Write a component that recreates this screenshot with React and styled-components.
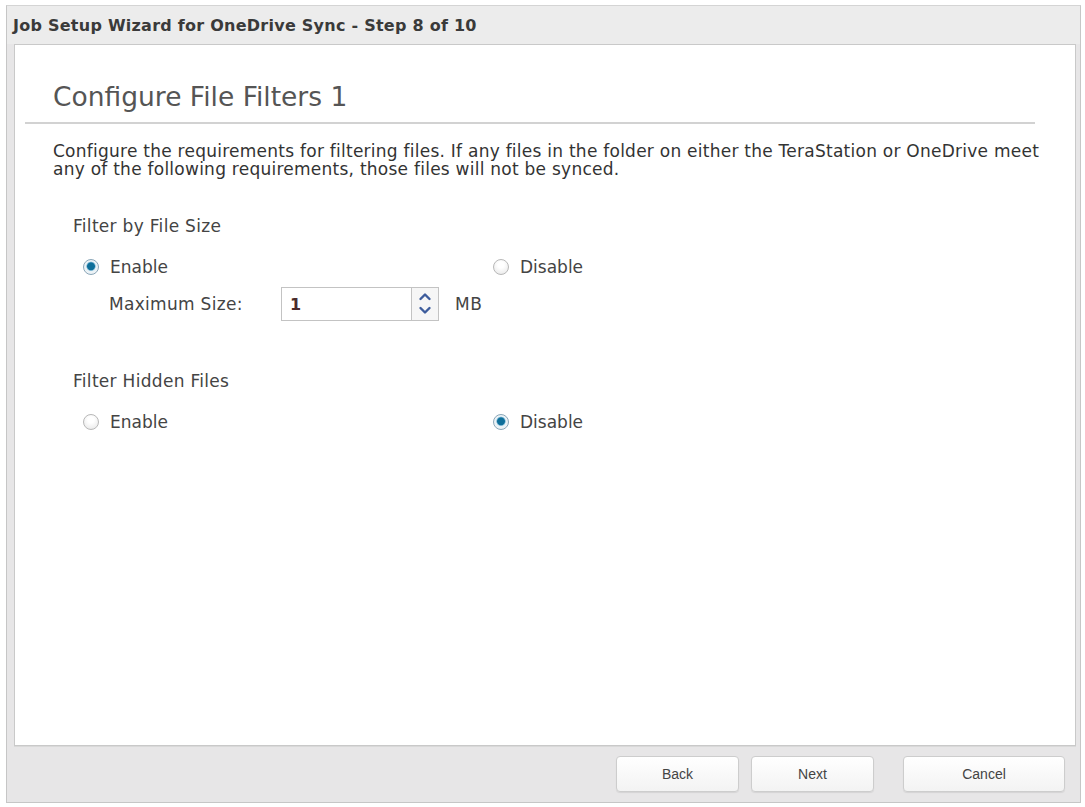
import styled, { createGlobalStyle } from 'styled-components';
import { useState } from 'react';

const GlobalStyle = createGlobalStyle`
  html, body {
    margin: 0;
    background: #fff;
  }
  body {
    font-family: "DejaVu Sans", Tahoma, sans-serif;
    color: #333;
  }
`;

function Radio({ checked, label, onClick }) {
  return (
    <RadioLabel onClick={onClick}>
      <RadioDot checked={checked} />
      {label}
    </RadioLabel>
  );
}

function Spinner() {
  return (
    <SpinBox>
      <svg width="14" height="30" viewBox="0 0 14 30">
        <path d="M2.5 10 L7 5.5 L11.5 10" fill="none" stroke="#3d5c9c" strokeWidth="2.4" strokeLinecap="round" strokeLinejoin="round" />
        <path d="M2.5 19 L7 23.5 L11.5 19" fill="none" stroke="#3d5c9c" strokeWidth="2.4" strokeLinecap="round" strokeLinejoin="round" />
      </svg>
    </SpinBox>
  );
}

function App() {
  const [sizeFilter, setSizeFilter] = useState(true);
  const [hiddenFilter, setHiddenFilter] = useState(false);

  return (
    <>
      <GlobalStyle />
      <Window>
        <TitleBar>Job Setup Wizard for OneDrive Sync - Step 8 of 10</TitleBar>
        <Panel>
          <Heading>Configure File Filters 1</Heading>
          <Divider />
          <Intro>
            Configure the requirements for filtering files. If any files in the folder on either the TeraStation or OneDrive meet
            <br />
            any of the following requirements, those files will not be synced.
          </Intro>

          <SectionTitle>Filter by File Size</SectionTitle>
          <RadioRow>
            <Radio checked={sizeFilter} label="Enable" onClick={() => setSizeFilter(true)} />
            <Radio checked={!sizeFilter} label="Disable" onClick={() => setSizeFilter(false)} />
          </RadioRow>
          <SizeRow>
            <FieldLabel>Maximum Size:</FieldLabel>
            <NumberBox>1</NumberBox>
            <Spinner />
            <Unit>MB</Unit>
          </SizeRow>

          <SectionTitle gap={50}>Filter Hidden Files</SectionTitle>
          <RadioRow>
            <Radio checked={hiddenFilter} label="Enable" onClick={() => setHiddenFilter(true)} />
            <Radio checked={!hiddenFilter} label="Disable" onClick={() => setHiddenFilter(false)} />
          </RadioRow>
        </Panel>
        <Footer>
          <Button>Back</Button>
          <Button>Next</Button>
          <Button wide>Cancel</Button>
        </Footer>
      </Window>
    </>
  );
}

const Window = styled.div`
  margin: 5px 4px 0 6px;
  height: 798px;
  box-sizing: border-box;
  border: 1px solid #c6c6c6;
  border-top-color: #d4d4d4;
  background: #e7e6e7;
  display: flex;
  flex-direction: column;
`;

const TitleBar = styled.div`
  height: 38px;
  display: flex;
  align-items: center;
  padding-left: 6px;
  background: #ececec;
  font-size: 16px;
  font-weight: bold;
  letter-spacing: 0.25px;
  color: #3a3a3a;
`;

const Panel = styled.div`
  flex: 1;
  margin: 0 4px 0 7px;
  padding: 38px 0 0 0;
  background: #fff;
  border: 1px solid #c9c9c9;
  box-shadow: 0 1px 0 #d9d9d9;
`;

const Heading = styled.h1`
  margin: 0 0 0 38px;
  font-size: 26.5px;
  line-height: 28px;
  font-weight: normal;
  color: #555;
`;

const Divider = styled.div`
  height: 2px;
  margin: 11px 40px 0 10px;
  background: #d2d2d2;
`;

const Intro = styled.p`
  margin: 18px 0 0 38px;
  font-size: 17px;
  line-height: 18px;
  letter-spacing: 0.25px;
  white-space: nowrap;
  color: #333;
`;

const SectionTitle = styled.div`
  margin: ${(p) => p.gap ?? 38}px 0 0 58px;
  font-size: 17px;
  line-height: 20px;
  letter-spacing: 0.3px;
  color: #444;
`;

const RadioRow = styled.div`
  display: grid;
  grid-template-columns: 410px auto;
  margin: 21px 0 0 68px;
`;

const RadioLabel = styled.label`
  display: flex;
  align-items: center;
  gap: 11px;
  height: 20px;
  font-size: 17px;
  color: #444;
  cursor: pointer;
`;

const RadioDot = styled.span`
  width: 14px;
  height: 14px;
  border-radius: 50%;
  border: 1px solid ${(p) => (p.checked ? '#8aa6b8' : '#b8b8b8')};
  background: ${(p) =>
    p.checked
      ? 'radial-gradient(circle at 50% 45%, #0f6f9a 0 3.5px, #5aa3c6 4px, #e9f2f7 5px, #f4f4f4 100%)'
      : 'radial-gradient(circle at 50% 35%, #ffffff 0 3px, #e4e4e4 100%)'};
  flex: none;
`;

const SizeRow = styled.div`
  display: flex;
  align-items: center;
  margin: 10px 0 0 94px;
  height: 34px;
`;

const FieldLabel = styled.div`
  width: 172px;
  font-size: 17px;
  letter-spacing: 0.3px;
  color: #444;
`;

const NumberBox = styled.div`
  width: 130px;
  height: 34px;
  box-sizing: border-box;
  border: 1px solid #c3c3c3;
  border-right: none;
  display: flex;
  align-items: center;
  padding-left: 8px;
  font-size: 16px;
  font-weight: bold;
  color: #4a2b2b;
  background: #fff;
`;

const SpinBox = styled.div`
  width: 28px;
  height: 34px;
  box-sizing: border-box;
  border: 1px solid #c3c3c3;
  display: flex;
  align-items: center;
  justify-content: center;
  background: #f6f6f6;
`;

const Unit = styled.div`
  margin-left: 16px;
  font-size: 17px;
  letter-spacing: 0.6px;
  color: #444;
`;

const Footer = styled.div`
  height: 56px;
  display: flex;
  align-items: center;
  justify-content: flex-end;
  gap: 12px;
  padding-right: 15px;
`;

const Button = styled.button`
  width: ${(p) => (p.wide ? 162 : 123)}px;
  height: 36px;
  margin-left: ${(p) => (p.wide ? 17 : 0)}px;
  border: 1px solid #cdcdcd;
  border-radius: 4px;
  background: linear-gradient(#ffffff, #f3f3f3);
  box-shadow: 0 1px 1px rgba(0, 0, 0, 0.08);
  font-family: "Liberation Sans", Arial, sans-serif;
  font-size: 14px;
  color: #444;
  cursor: pointer;
`;

export default App;
